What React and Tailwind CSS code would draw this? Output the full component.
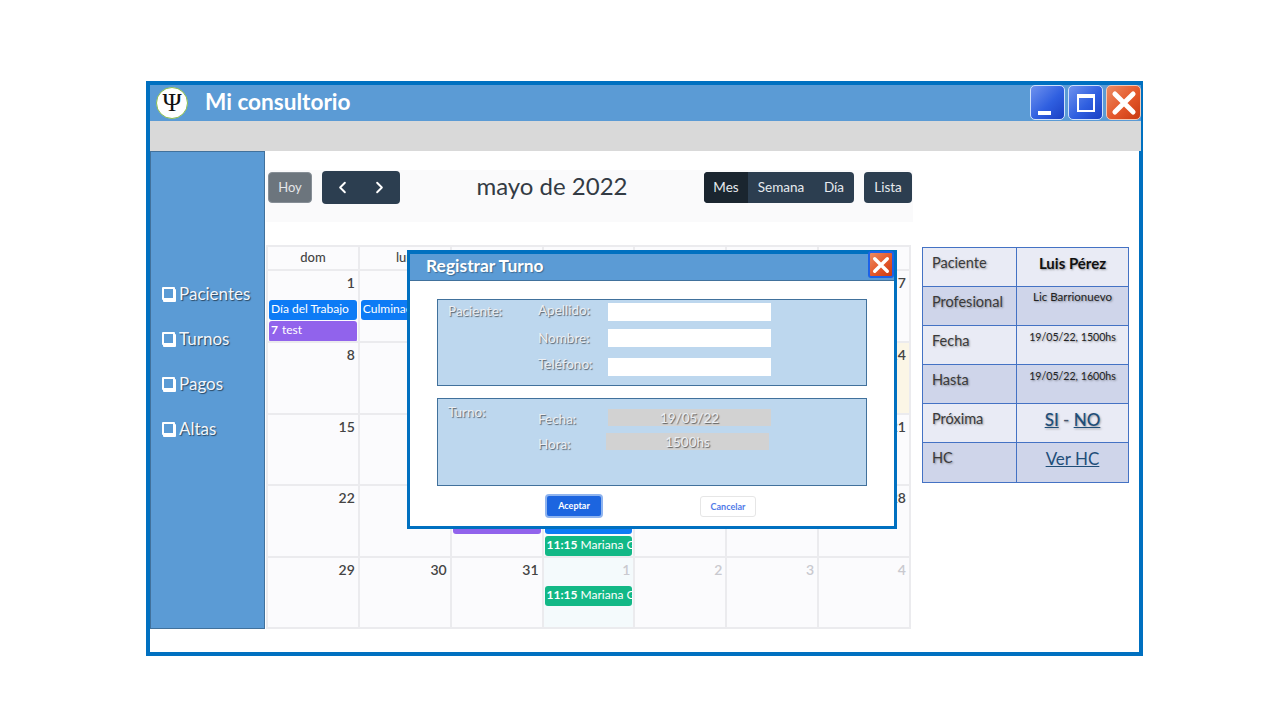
import React from "react";
import { ChevronLeft, ChevronRight } from "lucide-react";

const lato = "font-['Lato','Carlito','Liberation_Sans',sans-serif]";
const shadow = "[text-shadow:1px_1px_1px_rgba(0,0,0,0.55)]";
const soft = "[text-shadow:1px_1px_2px_rgba(0,0,0,0.35)]";

function CloseGlyph({ size = 20 }) {
  return (
    <svg width={size} height={size} viewBox="0 0 20 20" fill="none">
      <path d="M3 3 L17 17 M17 3 L3 17" stroke="#fff" strokeWidth="3.8" strokeLinecap="round" />
    </svg>
  );
}

function WinButton({ red, children }) {
  return (
    <div
      className={
        "w-[35px] h-[35px] rounded-[5px] border flex items-center justify-center relative " +
        (red
          ? "bg-[linear-gradient(135deg,#ec8b63,#e4572a_55%,#c93a12)] border-[#f3c9b5]"
          : "bg-[linear-gradient(135deg,#6f92ee,#2f5fe0_55%,#1a3fc4)] border-[#cfe0fb]")
      }
    >
      {children}
    </div>
  );
}

function Ev({ color, children, h = "h-[20px]", className = "" }) {
  return (
    <div
      className={`${color} ${h} ${className} rounded-[3px] text-white text-[12px] leading-[18px] pl-[2px] overflow-hidden whitespace-nowrap`}
    >
      {children}
    </div>
  );
}

const green = "bg-[#12b886]";
const blue = "bg-[#0d7bf5]";
const purple = "bg-[#9163ec]";

function Cell({ n, muted, bg = "", children, h }) {
  return (
    <div className={`border-r-2 border-b-2 border-[#ebebee] ${bg} ${h} overflow-hidden`}>
      <div className={`text-right pr-[3px] pt-[2px] text-[14px] font-semibold leading-[20px] h-[29px] ${muted ? "text-[#c9c9cf]" : "text-[#444]"}`}>
        {n}
      </div>
      <div className="pl-[1px] pr-[1px] flex flex-col gap-[1px]">{children}</div>
    </div>
  );
}

function Calendar() {
  const heads = ["dom", "lun", "mar", "mié", "jue", "vie", "sáb"];
  const rows = [
    { h: "h-[72px]", days: [1, 2, 3, 4, 5, 6, 7] },
    { h: "h-[72px]", days: [8, 9, 10, 11, 12, 13, 14] },
    { h: "h-[71px]", days: [15, 16, 17, 18, 19, 20, 21] },
    { h: "h-[72px]", days: [22, 23, 24, 25, 26, 27, 28] },
    { h: "h-[71px]", days: [29, 30, 31, 1, 2, 3, 4] },
  ];
  const events = {
    "0-0": (
      <>
        <Ev color={blue}>Día del Trabajo</Ev>
        <Ev color={purple} h="h-[21px]">
          <b>7</b>
          <span className="ml-[4px]">test</span>
        </Ev>
      </>
    ),
    "0-1": <Ev color={blue}>Culminación</Ev>,
    "3-2": <Ev color={purple} className="mt-[-1px]">7 Reg</Ev>,
    "3-3": (
      <>
        <Ev color={blue} className="mt-[-1px]"> </Ev>
        <Ev color={green} className="mt-[1px]">
          <b>11:15</b> Mariana G
        </Ev>
      </>
    ),
    "4-3": <Ev color={green} className="mt-[-1px]"><b>11:15</b> Mariana G</Ev>,
  };
  return (
    <div className="w-[645px] mt-[23px] border-l-2 border-t-2 border-[#ebebee] text-[#444] bg-[#fbfbfd]">
      <div className="grid grid-cols-7">
        {heads.map((d) => (
          <div key={d} className="h-[24px] border-r-2 border-b-2 border-[#ebebee] text-center text-[13px] font-medium leading-[21px] text-[#444]">
            {d}
          </div>
        ))}
      </div>
      {rows.map((r, ri) => (
        <div key={ri} className="grid grid-cols-7">
          {r.days.map((d, ci) => (
            <Cell
              key={ci}
              n={d}
              h={r.h}
              muted={ri === 4 && ci >= 3}
              bg={ri === 1 && ci === 6 ? "bg-[#fbf6e6]" : ri === 4 && ci === 3 ? "bg-[#f4fafc]" : ""}
            >
              {events[`${ri}-${ci}`]}
            </Cell>
          ))}
        </div>
      ))}
    </div>
  );
}

function Toolbar() {
  return (
    <div className="h-[52px] w-[647px] bg-[#fafafb] flex items-start relative">
      <button className="ml-[2px] mt-[2px] w-[44px] h-[31px] rounded-[4px] bg-[#6c757d] border border-[#868e96] text-[#e4e6e8] text-[13px]">Hoy</button>
      <div className="ml-[10px] mt-[1px] w-[78px] h-[33px] rounded-[4px] bg-[#2c3e50] flex items-center justify-around px-[2px] text-white">
        <ChevronLeft size={19} strokeWidth={2.4} />
        <ChevronRight size={19} strokeWidth={2.4} />
      </div>
      <div className="ml-[76px] mt-[-1px] w-[152px] text-center text-[24px] leading-[33px] text-[#333b44] whitespace-nowrap">mayo de 2022</div>
      <div className="ml-[76px] mt-[2px] w-[150px] h-[31px] rounded-[4px] bg-[#2c3e50] overflow-hidden flex text-[13.5px] leading-[30px] text-[#e6eaee]">
        <div className="w-[44px] bg-[#1a252f] text-center">Mes</div>
        <div className="w-[66px] text-center">Semana</div>
        <div className="w-[40px] text-center">Día</div>
      </div>
      <div className="ml-[10px] mt-[2px] w-[48px] h-[31px] rounded-[4px] bg-[#2c3e50] text-center text-[13.5px] leading-[30px] text-[#e6eaee]">Lista</div>
    </div>
  );
}

function InfoTable() {
  const small = `text-[#222] ${soft}`;
  const rows = [
    ["Paciente", <span className={`text-[15px] font-bold text-[#111] ${soft}`}>Luis Pérez</span>, "pt-[5px]"],
    ["Profesional", <span className={`text-[11.5px] ${small}`}>Lic Barrionuevo</span>, "mt-[-2px]"],
    ["Fecha", <span className={`text-[10.6px] ${small}`}>19/05/22, 1500hs</span>, "mt-[-1px]"],
    ["Hasta", <span className={`text-[10.6px] ${small}`}>19/05/22, 1600hs</span>, "mt-[-1px]"],
    [
      "Próxima",
      <span className={`text-[17px] font-medium text-[#44546a] ${soft}`}>
        <span className="underline text-[#1f4e79]">SI</span> - <span className="underline text-[#1f4e79]">NO</span>
      </span>,
      "pt-[6px]",
    ],
    ["HC", <span className="text-[17px] underline text-[#1f4e79]">Ver HC</span>, "pt-[6px]"],
  ];
  return (
    <div className={`w-[207px] ml-[9px] mt-[96px] h-[236px] border border-[#4472c4] ${lato}`}>
      {rows.map(([k, v, pad], i) => (
        <div key={k} className={`flex h-[39px] ${i < 5 ? "border-b border-[#4472c4]" : ""} ${i % 2 ? "bg-[#cfd5ea]" : "bg-[#e9ebf5]"}`}>
          <div className={`w-[94px] shrink-0 border-r border-[#4472c4] pl-[9px] pt-[5px] text-[14.5px] leading-[20px] text-[#3a3a3a] ${soft}`}>{k}</div>
          <div className={`flex-1 text-center leading-[20px] ${pad}`}>{v}</div>
        </div>
      ))}
    </div>
  );
}

const label = `text-[13.5px] leading-[18px] text-[#eceff3] ${shadow}`;

function Modal() {
  return (
    <div className={`absolute left-[257px] top-[165px] w-[490px] h-[279px] border-x-[3px] border-b-[3px] border-t-[4px] border-[#0070c0] bg-white ${lato}`}>
      <div className="h-[27px] bg-[#5b9bd5] border-b border-[#41719c] pl-[16px] text-white font-bold text-[17.4px] leading-[24px] [text-shadow:1px_1px_1px_rgba(0,0,0,0.3)]">
        Registrar Turno
      </div>
      <div className="absolute left-[458px] top-[-3px] w-[26px] h-[27px] rounded-[3px] border-2 border-[#1c62e8] bg-[linear-gradient(135deg,#ec8b63,#e4572a_55%,#c93a12)] flex items-center justify-center">
        <CloseGlyph size={18} />
      </div>

      <div className="mx-[27px] mt-[18px] w-[430px] h-[87px] bg-[#bdd7ee] border border-[#41719c] pl-[10px] pt-[3px] flex">
        <div className={`w-[90px] ${label} mt-[-1px]`}>Paciente:</div>
        <div className="flex flex-col">
          <div className="flex h-[18px]"><div className={`w-[70px] ${label} mt-[-2px]`}>Apellido:</div><div className="w-[163px] bg-white" /></div>
          <div className="flex h-[18px] mt-[8px]"><div className={`w-[70px] ${label}`}>Nombre:</div><div className="w-[163px] bg-white" /></div>
          <div className="flex h-[18px] mt-[11px]"><div className={`w-[70px] ${label} mt-[-3px]`}>Teléfono:</div><div className="w-[163px] bg-white" /></div>
        </div>
      </div>

      <div className="mx-[27px] mt-[12px] w-[430px] h-[88px] bg-[#bdd7ee] border border-[#41719c] pl-[10px] pt-[4px] flex">
        <div className={`w-[90px] ${label}`}>Turno:</div>
        <div className="flex flex-col pt-[6px]">
          <div className="flex h-[17px] items-center"><div className={`w-[70px] ${label} pt-[2px]`}>Fecha:</div><div className={`w-[163px] h-[17px] bg-[#d2d2d2] text-center ${label}`}>19/05/22</div></div>
          <div className="flex h-[17px] mt-[7px] items-center"><div className={`w-[68px] ${label} pt-[4px]`}>Hora:</div><div className={`w-[163px] h-[17px] bg-[#d2d2d2] text-center ${label}`}>1500hs</div></div>
        </div>
      </div>

      <div className="flex items-start mt-[8px] pl-[135px]">
        <button className="w-[58px] h-[24px] rounded-[4px] bg-[#1c65e0] border-2 border-[#8fb4ef] text-white text-[9px] font-bold">Aceptar</button>
        <button className="ml-[97px] mt-[2px] w-[56px] h-[21px] rounded-[3px] bg-white border border-[#e6e6e6] text-[#4f7be8] text-[9px] font-bold">Cancelar</button>
      </div>
    </div>
  );
}

export default function App() {
  return (
    <div className="w-[1280px] h-[720px] bg-white pl-[146px] pt-[81px] font-['Lato','Liberation_Sans',sans-serif]">
      <div className="relative w-[997px] h-[575px] border-4 border-[#0070c0] bg-white">
        <div className={`h-[36px] bg-[#5b9bd5] flex items-center mr-[-2px] ${lato}`}>
          <div className="ml-[6px] w-[32px] h-[32px] rounded-full bg-white border border-[#8cbf4f] flex items-center justify-center text-[26px] leading-none text-[#111] font-['Liberation_Serif',serif]">
            Ψ
          </div>
          <div className="ml-[17px] mt-[-2px] text-white font-bold text-[22.6px] leading-[30px] whitespace-nowrap">Mi consultorio</div>
          <div className="ml-auto flex gap-[3px] mt-[-1px]">
            <WinButton><div className="absolute left-[7px] bottom-[4px] w-[13px] h-[4px] bg-white" /></WinButton>
            <WinButton><div className="w-[18px] h-[18px] border-2 border-t-[4px] border-white" /></WinButton>
            <WinButton red><CloseGlyph size={26} /></WinButton>
          </div>
        </div>
        <div className="h-[30px] bg-[#d9d9d9] mr-[-2px]" />
        <div className="flex h-[478px]">
          <div className={`w-[115px] shrink-0 bg-[#5b9bd5] border border-[#41719c] pt-[119px] pl-[11px] ${lato}`}>
            {["Pacientes", "Turnos", "Pagos", "Altas"].map((t) => (
              <div key={t} className={`h-[45px] flex items-center text-[17px] text-[#f2f6fb] ${shadow}`}>
                <span className="w-[13px] h-[13px] border-2 border-white bg-[#5b9bd5] rounded-[1px] mr-[4px] shadow-[1px_2px_0_#fff]" />
                {t}
              </div>
            ))}
          </div>
          <div className="ml-[1px] w-[647px] pt-[19px] font-['Lato','Liberation_Sans',sans-serif]">
            <Toolbar />
            <Calendar />
          </div>
          <InfoTable />
        </div>
        <Modal />
      </div>
    </div>
  );
}
